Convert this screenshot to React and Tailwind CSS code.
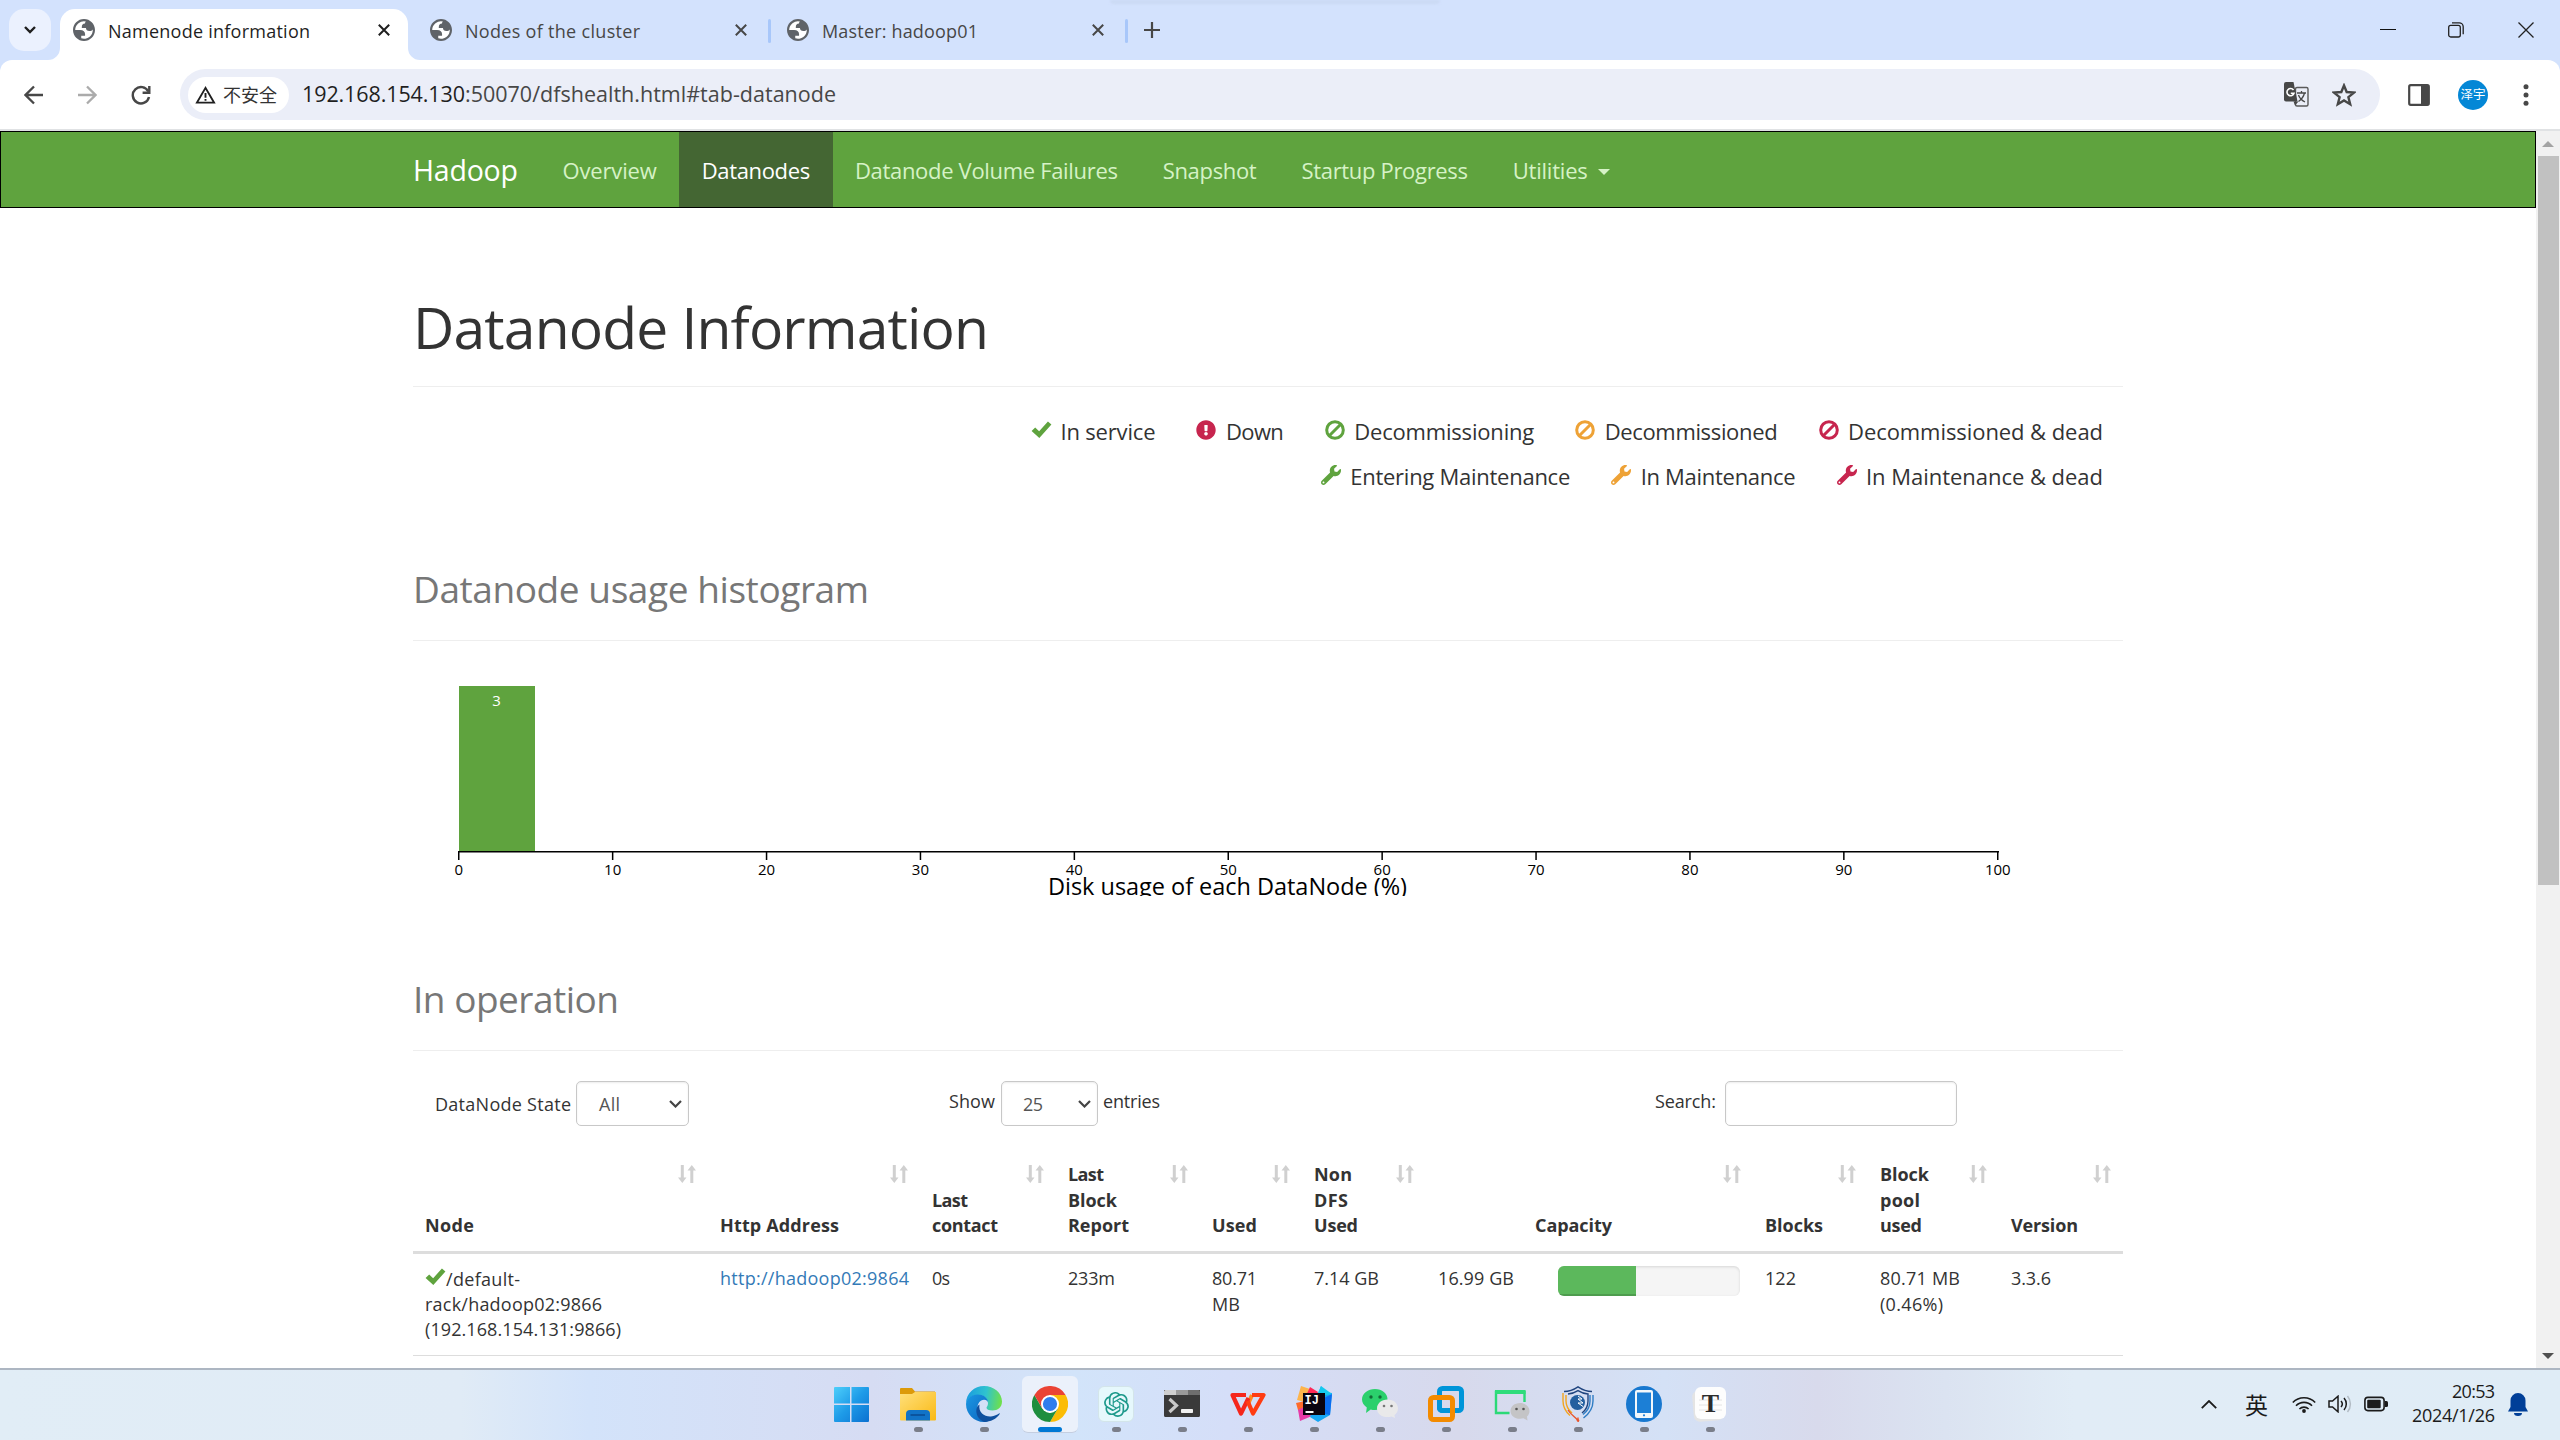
import React, { useLayoutEffect, useRef, useState } from "react";
import { SiOpenai } from "react-icons/si";
import { FaExclamationCircle, FaWrench } from "react-icons/fa";

/* Single-line text whose tracking is adjusted so that it spans `w` pixels. */
function T({ w, className = "", children }) {
  const ref = useRef(null);
  const [ls, setLs] = useState(0);
  useLayoutEffect(() => {
    const natural = ref.current.getBoundingClientRect().width;
    setLs((w - natural) / Math.max(1, String(children).length - 1));
  }, [w, children]);
  return (
    <span
      ref={ref}
      className={"inline-block whitespace-pre " + className}
      style={{ letterSpacing: ls + "px", marginRight: -ls + "px" }}
    >
      {children}
    </span>
  );
}

/* ---------- browser chrome ---------- */

const Globe = () => (
  <svg viewBox="2 2 20 20" className="h-[22px] w-[22px] shrink-0">
    <circle cx="12" cy="12" r="9" fill="#fff" />
    <path
      fill="#5f6368"
      fillRule="evenodd"
      d="M12 22C6.477 22 2 17.523 2 12S6.477 2 12 2s10 4.477 10 10-4.477 10-10 10zM4 12h4.4c3.407.022 4.922 1.73 4.543 5.127H9.488v2.47a8.004 8.004 0 0 0 10.498-8.083C19.327 12.504 18.332 13 17 13c-2.137 0-3.206-.916-3.206-2.75h-3.748c-.274-2.728.683-4.092 2.87-4.092 0-.975.327-1.597.811-1.97A8.004 8.004 0 0 0 4 12z"
    />
  </svg>
);

const CloseX = ({ color }) => (
  <svg viewBox="0 0 12 12" className="h-3 w-3" fill="none" stroke={color} strokeWidth="2">
    <path d="M.8.8l10.4 10.4M11.2.8L.8 11.2" />
  </svg>
);

function Tab({ title, w, active }) {
  return (
    <div
      className={
        active
          ? "relative mt-[9px] ml-[9px] flex h-[51px] w-[348px] rounded-t-[15px] bg-white pl-[13px]"
          : "relative mt-[9px] flex h-[51px] w-[357px] pl-[22px]"
      }
    >
      {active && (
        <>
          <svg viewBox="0 0 12 12" className="absolute bottom-0 -left-3 h-3 w-3">
            <path d="M12 0v12H0A12 12 0 0 0 12 0z" fill="#fff" />
          </svg>
          <svg viewBox="0 0 12 12" className="absolute -right-3 bottom-0 h-3 w-3">
            <path d="M0 0v12h12A12 12 0 0 1 0 0z" fill="#fff" />
          </svg>
        </>
      )}
      <div className="flex h-[42px] items-center">
        <Globe />
        <div className={"ml-[13px] w-[270px] pt-[2px] text-[18px] " + (active ? "text-[#1f1f1f]" : "text-[#474747]")}>
          <T w={w}>{title}</T>
        </div>
        <CloseX color={active ? "#1f1f1f" : "#474747"} />
      </div>
    </div>
  );
}

function TabStrip() {
  return (
    <div className="relative flex h-[60px] bg-[#d3e2fd]">
      <div className="absolute top-0 left-[1110px] h-[4px] w-[330px] rounded-b-full bg-[#cbdaf4] blur-[1px]" />
      <div className="mt-[9px] ml-[9px] flex h-[42px] w-[42px] items-center justify-center rounded-[15px] bg-[#ebf1fe]">
        <svg viewBox="0 0 12 8" className="h-2 w-3" fill="none" stroke="#1f1f1f" strokeWidth="2.4">
          <path d="M1 1l5 5 5-5" />
        </svg>
      </div>
      <Tab title="Namenode information" w={202} active />
      <Tab title="Nodes of the cluster" w={175} />
      <div className="-mr-[6px] mt-[19px] ml-[3px] h-6 w-[3px] rounded bg-[#a8c7fa]" />
      <Tab title="Master: hadoop01" w={156} />
      <div className="mt-[19px] ml-[3px] h-6 w-[3px] rounded bg-[#a8c7fa]" />
      <svg viewBox="0 0 16 16" className="mt-[22px] ml-4 h-4 w-4" stroke="#474747" strokeWidth="2.2">
        <path d="M8 0v16M0 8h16" />
      </svg>
      <div className="mt-[22px] mr-[26px] ml-auto flex h-4 items-center">
        <svg viewBox="0 0 16 16" className="mr-[52px] h-4 w-4" stroke="#111" strokeWidth="1">
          <path d="M0 7.5h16" />
        </svg>
        <svg viewBox="0 0 16 16" className="mr-[54px] h-4 w-4" fill="none" stroke="#222" strokeWidth="1.3">
          <rect x=".7" y="3.4" width="11.6" height="11.6" rx="2" />
          <path d="M4 .8h7.2a4 4 0 0 1 4 4v7.4" />
        </svg>
        <svg viewBox="0 0 16 16" className="h-4 w-4" fill="none" stroke="#222" strokeWidth="1.3">
          <path d="M.5.5l15 15M15.500.5l-15 15" />
        </svg>
      </div>
    </div>
  );
}

function Toolbar() {
  return (
    <div className="bg-[#d3e2fd]">
      <div className="flex h-[69px] items-center rounded-t-[12px] bg-white">
        <svg viewBox="0 0 20 20" className="ml-[24px] h-5 w-5" fill="none" stroke="#474747" strokeWidth="2.3">
          <path d="M19 10H2M10 1.500L1.500 10l8.500 8.500" />
        </svg>
        <svg viewBox="0 0 20 20" className="ml-[33px] h-5 w-5" fill="none" stroke="#ababab" strokeWidth="2.3">
          <path d="M1 10h17M10 1.500l8.500 8.500-8.500 8.500" />
        </svg>
        <svg viewBox="0 0 20 20" className="ml-[34px] h-5 w-5" fill="none" stroke="#474747" strokeWidth="2.4">
          <path d="M17.300 6.500A8.200 8.200 0 1 0 18 12" />
          <path d="M18.300 1v6.700h-6.700" />
        </svg>
        <div className="ml-[29px] flex h-[51px] w-[2200px] items-center rounded-full bg-[#ebeef8] pl-[8px]">
          <div className="flex h-[36px] w-[101px] items-center rounded-full bg-white pl-[7px]">
            <svg viewBox="0 0 22 19" className="h-[18px] w-[21px]" fill="none" stroke="#1f1f1f" strokeWidth="2">
              <path d="M11 2L2 17.500h18z" />
              <path d="M11 7.500v5M11 13.700v2" />
            </svg>
            <div className="ml-[7px] font-['Noto_Sans_CJK_SC',sans-serif] text-[18px] text-[#333]">
              <T w={54}>不安全</T>
            </div>
          </div>
          <div className="ml-[13px] flex text-[21.500px] text-[#474747]">
            <T w={163} className="text-[#1f1f1f]">192.168.154.130</T>
            <T w={371}>:50070/dfshealth.html#tab-datanode</T>
          </div>
          <svg viewBox="0 0 25 25" className="mr-[23px] ml-auto h-[25px] w-[25px]">
            <rect x="11.500" y="5.500" width="12.500" height="18.500" rx="1.500" fill="#ebeef8" stroke="#5a5a5a" strokeWidth="1.400" />
            <path d="M2 0h7.500l4 19.500H2a2 2 0 0 1-2-2V2a2 2 0 0 1 2-2z" fill="#474747" />
            <path d="M9.500 8A3.600 3.600 0 1 0 10 11.300H6.800" stroke="#fff" strokeWidth="1.600" fill="none" />
            <path d="M13 11h9M17.500 9v2M20.500 11c-1 4-3 6.500-6 8.500M14.500 13c1 3 3.500 5.500 6.500 7" stroke="#474747" strokeWidth="1.300" fill="none" />
            <path d="M9.500 19.500h5l-3.500 4z" fill="#474747" />
          </svg>
          <svg viewBox="0 0 24 24" className="mr-[24px] h-6 w-6" fill="none" stroke="#474747" strokeWidth="2.400">
            <path d="M12 2.500l2.700 6.500 7.200.6-5.500 4.600 1.800 7-6.200-3.800-6.200 3.800 1.800-7-5.500-4.600 7.200-.6z" />
          </svg>
        </div>
        <svg viewBox="0 0 22 22" className="ml-[28px] h-[22px] w-[22px]">
          <rect x="1.200" y="1.200" width="19.600" height="19.600" rx="1.500" fill="none" stroke="#474747" strokeWidth="2.200" />
          <path d="M13 1h7v20h-7z" fill="#474747" />
        </svg>
        <div className="ml-[28px] flex h-[30px] w-[30px] items-center justify-center rounded-full bg-[#0487d6] font-['Noto_Sans_CJK_SC',sans-serif] text-[12.500px] leading-none text-white">
          <T w={25}>泽宇</T>
        </div>
        <svg viewBox="0 0 6 22" className="ml-[35px] h-[22px] w-[6px]" fill="#474747">
          <circle cx="3" cy="2.700" r="2.500" />
          <circle cx="3" cy="11" r="2.500" />
          <circle cx="3" cy="19.300" r="2.500" />
        </svg>
      </div>
      <div className="h-[2px] bg-[#e0e2e4]" />
    </div>
  );
}

/* ---------- page ---------- */

function Nav() {
  const items = [
    ["Overview", 94.5],
    ["Datanodes", 108.5],
    ["Datanode Volume Failures", 263],
    ["Snapshot", 94],
    ["Startup Progress", 166.5],
    ["Utilities", 75],
  ];
  return (
    <nav className="flex h-[77px] border border-black bg-[#5fa33e] pl-[412px] text-[22px] text-[#d6f2c6]">
      <div className="flex w-[127px] items-center pt-px text-[28.500px] text-white">
        <T w={105}>Hadoop</T>
      </div>
      {items.map(([label, w]) => (
        <div
          key={label}
          className={
            "flex items-center px-[22.400px] pt-px " + (label === "Datanodes" ? "bg-[#446633] text-white" : "")
          }
        >
          <T w={w}>{label}</T>
          {label === "Utilities" && (
            <svg viewBox="0 0 12 6" className="mt-[3px] ml-[10px] h-[6px] w-3" fill="currentColor">
              <path d="M0 0h12L6 6z" />
            </svg>
          )}
        </div>
      ))}
    </nav>
  );
}

const Check = ({ className }) => (
  <svg viewBox="0 0 21 18" className={className} fill="#5fa33e">
    <path d="M0 10.500L3.800 6.800l4.200 4L17.300.5 21 3.800 8.200 18z" />
  </svg>
);

const Ban = ({ color }) => (
  <svg viewBox="0 0 20 20" className="h-5 w-5" fill="none" stroke={color} strokeWidth="3">
    <circle cx="10" cy="10" r="8.300" />
    <path d="M4.500 15.500l11-11" />
  </svg>
);

const GREEN = "#5fa33e";
const ORANGE = "#eea236";
const RED = "#c7254e";

function Item({ icon, label, w, gap = "pl-[9px]" }) {
  return (
    <div className="flex items-center">
      <div className="mb-[4px] flex w-[21px] justify-center">{icon}</div>
      <div className={gap}>
        <T w={w}>{label}</T>
      </div>
    </div>
  );
}

const Wrench = ({ color }) => <FaWrench color={color} className="h-5 w-5" />;

function Legend() {
  return (
    <div className="flex h-[113px] flex-col items-end pt-[22px] pr-[20px] text-[22px]">
      <div className="flex h-[45px] items-center gap-[40.400px]">
        <Item icon={<Check className="h-[17px] w-[21px]" />} label="In service" w={95} />
        <Item icon={<FaExclamationCircle color={RED} className="h-5 w-5" />} label="Down" w={58} />
        <Item icon={<Ban color={GREEN} />} label="Decommissioning" w={180} />
        <Item icon={<Ban color={ORANGE} />} label="Decommissioned" w={173} />
        <Item icon={<Ban color={RED} />} label="Decommissioned & dead" w={255} />
      </div>
      <div className="flex h-[45px] items-center gap-[40.400px]">
        <Item icon={<Wrench color={GREEN} />} label="Entering Maintenance" w={220} />
        <Item icon={<Wrench color={ORANGE} />} label="In Maintenance" w={155} />
        <Item icon={<Wrench color={RED} />} label="In Maintenance & dead" w={237} />
      </div>
    </div>
  );
}

function Histogram() {
  const ticks = [0, 10, 20, 30, 40, 50, 60, 70, 80, 90, 100];
  return (
    <svg width="1710" height="255" className="block overflow-hidden">
      <rect x="46" y="45" width="76" height="165" fill={GREEN} />
      <text x="83.500" y="64.500" fontSize="15" fill="#fff" textAnchor="middle">3</text>
      <path d="M45 210.750h1541" stroke="#000" strokeWidth="1.500" />
      {ticks.map((t) => (
        <g key={t}>
          <path d={`M${45.75 + t * 15.39} 210v9`} stroke="#000" strokeWidth="1.500" />
          <text x={45.75 + t * 15.39} y="233.500" fontSize="15" textAnchor="middle">{t}</text>
        </g>
      ))}
      <text x="635" y="254" fontSize="23.500" textLength="359" lengthAdjust="spacing">
        Disk usage of each DataNode (%)
      </text>
    </svg>
  );
}

const Select = ({ value, vw, className }) => (
  <div
    className={
      "flex h-[45px] items-center rounded-[5px] border border-[#c8c8c8] bg-white text-[#555] shadow-[inset_0_1px_2px_rgba(0,0,0,0.08)] " +
      className
    }
  >
    <T w={vw} className="pt-px">{value}</T>
    <svg viewBox="0 0 13 8" className="mr-[6px] ml-auto h-2 w-[13px]" fill="none" stroke="#444" strokeWidth="2.200">
      <path d="M1 1l5.500 5.500L12 1" />
    </svg>
  </div>
);

function Controls() {
  return (
    <div className="flex h-[99px] pt-[30px] text-[18px]">
      <div className="flex h-[46px] w-[163px] items-center pl-[22px]">
        <T w={136}>DataNode State</T>
      </div>
      <Select value="All" vw={21} className="w-[113px] pl-[22px]" />
      <div className="flex h-[40px] w-[312px] items-center justify-end pr-[6px]">
        <T w={46}>Show</T>
      </div>
      <Select value="25" vw={20} className="w-[97px] pl-[21px]" />
      <div className="flex h-[40px] w-[627px] items-center pl-[5px]">
        <T w={57}>entries</T>
        <T w={61} className="ml-[495px]">Search:</T>
      </div>
      <div className="h-[45px] w-[232px] rounded-[5px] border border-[#c8c8c8] shadow-[inset_0_1px_2px_rgba(0,0,0,0.08)]" />
    </div>
  );
}

const SortIcon = () => (
  <svg viewBox="0 0 18 18" className="mt-[3px] h-[18px] w-[18px] shrink-0" fill="#d0d0d0">
    <path d="M2.800 0h3v12.500h2.700L4.300 18 0 12.500h2.800z" />
    <path d="M12.300 18h3V5.500H18L13.800 0 9.500 5.500h2.800z" />
  </svg>
);

const COLS = "grid grid-cols-[295px_212px_136px_144px_102px_124px_327px_115px_131px_124px]";

function DataTable() {
  const heads = [
    [["Node", 49]],
    [["Http Address", 119]],
    [["Last", 36], ["contact", 66]],
    [["Last", 36], ["Block", 49], ["Report", 61]],
    [["Used", 45]],
    [["Non", 38], ["DFS", 34], ["Used", 44]],
    [["Capacity", 77]],
    [["Blocks", 58]],
    [["Block", 49], ["pool", 40], ["used", 42]],
    [["Version", 67]],
  ];
  return (
    <div className="text-[18px] leading-[25.700px]">
      <div className={COLS + " h-[104px] border-b-[3px] border-[#ddd] font-bold"}>
        {heads.map((lines, i) => (
          <div key={i} className="flex justify-between pt-3 pr-[12px] pb-3 pl-3">
            <div className={"flex flex-col items-start justify-end " + (i === 6 ? "pl-[97px]" : "")}>
              {lines.map(([t, w]) => (
                <T key={t} w={w}>{t}</T>
              ))}
            </div>
            <SortIcon />
          </div>
        ))}
      </div>
      <div className={COLS + " h-[102px] border-b border-[#ddd] *:flex *:flex-col *:items-start *:pt-3 *:pl-3"}>
        <div>
          <div className="flex h-[25.700px] pt-px">
            <Check className="mt-px h-[17px] w-[21px]" />
            <T w={74}>/default-</T>
          </div>
          <T w={177}>rack/hadoop02:9866</T>
          <T w={196}>(192.168.154.131:9866)</T>
        </div>
        <div className="text-[#337ab7]"><T w={189}>http://hadoop02:9864</T></div>
        <div><T w={18}>0s</T></div>
        <div><T w={47}>233m</T></div>
        <div>
          <T w={45}>80.71</T>
          <T w={28}>MB</T>
        </div>
        <div><T w={65}>7.14 GB</T></div>
        <div>
          <div className="flex">
            <T w={76}>16.99 GB</T>
            <div className="ml-[44px] flex h-[30px] w-[182px] overflow-hidden rounded-[6px] bg-[#f5f5f5] shadow-[inset_0_1px_3px_rgba(0,0,0,0.12)]">
              <div className="w-[78px] bg-[#5cb85c] shadow-[inset_0_-2px_0_rgba(0,0,0,0.15)]" />
            </div>
          </div>
        </div>
        <div><T w={31}>122</T></div>
        <div>
          <T w={80}>80.71 MB</T>
          <T w={63}>(0.46%)</T>
        </div>
        <div><T w={40}>3.3.6</T></div>
      </div>
    </div>
  );
}

function Page() {
  return (
    <div className="flex h-[1237px]">
      <div className="w-[2536px] overflow-hidden bg-white text-[#333]">
        <Nav />
        <main className="ml-[413px] w-[1710px]">
          <div className="flex h-[179px] items-end border-b border-[#eee] pb-[30px] text-[57px] leading-none">
            <T w={576}>Datanode Information</T>
          </div>
          <Legend />
          <div className="flex h-[141px] items-end border-b border-[#eee] pb-[33px] text-[37px] leading-none text-[#777]">
            <T w={456}>Datanode usage histogram</T>
          </div>
          <Histogram />
          <div className="flex h-[155px] items-end border-b border-[#eee] pb-[33px] text-[37px] leading-none text-[#777]">
            <T w={206}>In operation</T>
          </div>
          <Controls />
          <DataTable />
        </main>
      </div>
      <div className="flex w-6 flex-col items-center bg-[#f1f1f1]">
        <svg viewBox="0 0 12 6" className="mt-[10px] h-[6px] w-3" fill="#a3a3a3">
          <path d="M0 6h12L6 0z" />
        </svg>
        <div className="mt-[9px] h-[729px] w-[21px] bg-[#c1c1c1]" />
        <svg viewBox="0 0 12 6" className="mt-auto mb-[9px] h-[6px] w-3" fill="#505050">
          <path d="M0 0h12L6 6z" />
        </svg>
      </div>
    </div>
  );
}

/* ---------- taskbar ---------- */

const Ico = ({ children }) => (
  <svg viewBox="0 0 36 36" className="h-9 w-9">{children}</svg>
);

const Windows = () => (
  <Ico>
    <defs>
      <linearGradient id="win" x1="0" y1="0" x2="36" y2="36" gradientUnits="userSpaceOnUse">
        <stop stopColor="#4fd0fb" />
        <stop offset=".5" stopColor="#1e9be8" />
        <stop offset="1" stopColor="#0a6fd0" />
      </linearGradient>
    </defs>
    <path fill="url(#win)" d="M1 1h15v16.500H0V2a1 1 0 0 1 1-1zM17.500 1H34a1 1 0 0 1 1 1v15.500H17.500zM0 19h16v17H1a1 1 0 0 1-1-1zM17.500 19H35v16a1 1 0 0 1-1 1H17.500z" />
  </Ico>
);

const Folder = () => (
  <Ico>
    <defs>
      <linearGradient id="fol" x1="0" y1="0" x2="1" y2="1">
        <stop stopColor="#ffe07c" />
        <stop offset="1" stopColor="#f9b914" />
      </linearGradient>
    </defs>
    <path fill="#dc9a0a" d="M1 2h11l3 3.500h20V12H0V3a1 1 0 0 1 1-1z" />
    <path fill="url(#fol)" d="M0 8h12l3-2h21v27.500a1 1 0 0 1-1 1H1a1 1 0 0 1-1-1z" />
    <path fill="#1173c7" d="M6 34.500V28a4 4 0 0 1 4-4h16a4 4 0 0 1 4 4v6.500z" />
    <path stroke="#0a4a91" strokeWidth="1.500" d="M10.500 29h14.500" />
  </Ico>
);

const Edge = () => (
  <Ico>
    <defs>
      <linearGradient id="ed1" x1="0" y1=".3" x2="1" y2=".4">
        <stop stopColor="#1a9be0" />
        <stop offset=".55" stopColor="#2fc3cf" />
        <stop offset="1" stopColor="#6ee04c" />
      </linearGradient>
      <linearGradient id="ed2" x1="0" y1="0" x2="1" y2="1">
        <stop stopColor="#1b98e4" />
        <stop offset="1" stopColor="#0b63bd" />
      </linearGradient>
    </defs>
    <path fill="url(#ed1)" d="M0 18C0 7 8.500 0 18 0c10 0 18 7 18 15.500 0 6-4.500 9-9.500 9-4 0-6-1.500-6-2.800 0-1 1.500-1.700 1.500-4.500C22 12.500 17.500 9 12 9 5.500 9 1 13 0 18z" />
    <path fill="url(#ed2)" d="M0 18c.5-5 5-9.500 11.500-9.500 6 0 10.500 3.500 10.500 8 0-1-1.500-2.800-4-2.800-4 0-6.500 4-6.500 8 0 8 6 13 12 12.800C21 35.600 19.500 36 18 36 8 36 0 28 0 18z" />
    <path fill="#0f4f9e" d="M13.500 18.500C12 27 19 31 25 30.500c3.500-.3 6-1.800 8-3 .7-.4 1 .1.700.6C30.500 33 24.500 36 18.500 36 12.500 34 9.500 28 10.500 23c.5-2.300 1.500-3.700 3-4.500z" />
  </Ico>
);

const Chrome = () => (
  <Ico>
    <path fill="#fbbc05" d="M18 9h15.600A18 18 0 0 1 18 36l7.800-13.500z" />
    <path fill="#1e8e3e" d="M2.400 9l7.800 13.500L18 27l7.800-4.500L18 36A18 18 0 0 1 2.400 9z" />
    <path fill="#ea4335" d="M18 9h15.600A18 18 0 0 0 2.400 9l7.800 13.500z" />
    <circle cx="18" cy="18" r="9" fill="#fff" />
    <circle cx="18" cy="18" r="7.100" fill="#2f7ded" />
  </Ico>
);

const Gpt = () => (
  <div className="flex h-9 w-9 items-center justify-center rounded-[6px] border border-[#d3e5ea] bg-[#e6f8fc]">
    <SiOpenai color="#1f9a8c" className="h-[25px] w-[25px]" />
  </div>
);

const Terminal = () => (
  <Ico>
    <path fill="#3a3a3a" d="M0 4h36v25.500a1.500 1.500 0 0 1-1.500 1.500h-33A1.500 1.500 0 0 1 0 29.500z" />
    <path fill="#cfcfcf" d="M0 9V5.500A1.500 1.500 0 0 1 1.500 4H12v5z" />
    <path fill="#9a9a9a" d="M12 4h12v5H12z" />
    <path fill="#6e6e6e" d="M24 4h10.500A1.500 1.500 0 0 1 36 5.500V9H24z" />
    <path d="M5.500 13l7 6.500-7 6.500" fill="none" stroke="#c9c9c9" strokeWidth="3.200" />
    <rect x="17" y="23" width="12" height="4" rx=".8" fill="#f0f0f0" />
  </Ico>
);

const Wps = () => (
  <Ico>
    <g fill="none" strokeLinejoin="round" strokeWidth="4.200">
      <path stroke="#ff8a1e" d="M18 18l4-9" />
      <path stroke="#f5261c" d="M16 9H2.500L11 27.500 18.500 12" />
      <path stroke="#ff3c12" d="M17.500 15L23 27.500 33.500 9H22" />
    </g>
  </Ico>
);

const Idea = () => (
  <Ico>
    <path fill="#fdb44b" d="M5 0l9 3L9 16 1 14z" />
    <path fill="#fe2857" d="M14 1l8 5-6 12L2 24l6-10z" />
    <path fill="#ff6a2b" d="M0 17l9-2-1 8-6 1z" />
    <path fill="#e83aa8" d="M2 24l8-4 6 10-12 5z" />
    <path fill="#16a6f5" d="M25 0l3 6 8 1-2 22-12 7-8-5z" />
    <path fill="#0b6df0" d="M36 8l-8 4v16l6 1z" />
    <path fill="#15c9ef" d="M25 0l-4 9h10l5-1z" />
    <rect x="7" y="7" width="22" height="22" fill="#0b0410" />
    <text x="8.500" y="17.500" fontFamily="Liberation Mono" fontWeight="700" fontSize="12" fill="#fff">IJ</text>
    <path fill="#fff" d="M9.500 25h8v2h-8z" />
  </Ico>
);

const Wechat = () => (
  <Ico>
    <path fill="#2bd06c" d="M13 3c7 0 12.500 4.600 12.500 10.500S20 24 13 24c-1.500 0-3-.2-4.300-.6L4 27l.8-5.500C2 19.500 0 16.800 0 13.500 0 7.600 6 3 13 3z" />
    <circle cx="9" cy="11" r="1.700" fill="#136b38" />
    <circle cx="18" cy="11" r="1.700" fill="#136b38" />
    <path fill="#e9e9ea" d="M25.500 13.500c6 0 10.500 3.900 10.500 8.900 0 2.700-1.500 5-3.500 6.600l.5 3-3.500-1.500c-1.200.4-2.600.6-4 .6-6 0-10.500-3.800-10.500-8.700s4.500-8.900 10.500-8.900z" />
    <circle cx="22" cy="20" r="1.300" fill="#777" />
    <circle cx="29.500" cy="20" r="1.300" fill="#777" />
  </Ico>
);

const Vmware = () => (
  <Ico>
    <rect x="11.500" y="2.500" width="22" height="22" rx="3" fill="none" stroke="#0095d9" strokeWidth="5" />
    <rect x="2.500" y="11.500" width="22" height="22" rx="3" fill="none" stroke="#f38b00" strokeWidth="5" />
    <path d="M11.500 16v6a2.500 2.500 0 0 0 2.500 2.500h8" fill="none" stroke="#0095d9" strokeWidth="5" />
  </Ico>
);

const WechatScreen = () => (
  <Ico>
    <path d="M30.500 16V6H2v21h13.500" fill="none" stroke="#2bd977" strokeWidth="2.400" />
    <path d="M1 4h30.500v4H1z" fill="#2fdc7b" />
    <path fill="#c4c4c6" d="M26 17c5.500 0 9.500 3.500 9.500 8 0 2.300-1 4.200-2.500 5.500l.5 4-4-2.200c-1 .3-2.200.5-3.500.5-5.500 0-9.500-3.400-9.500-7.800s4-8 9.500-8z" />
    <circle cx="22.500" cy="23" r="1.300" fill="#555" />
    <circle cx="29.500" cy="23" r="1.300" fill="#555" />
  </Ico>
);

const Shield = () => (
  <Ico>
    <g fill="none" strokeWidth="1.400">
      <path stroke="#20457f" d="M4 5.500C9 5.500 14 3.500 18 .8c4 2.700 9 4.700 14 4.700" />
      <path stroke="#f2a51f" d="M3 7v8c0 6 2.500 10.500 7 14.500M6 9v6c0 4.500 2 8.500 6 12" />
      <path stroke="#e8542b" d="M8 24c3 5 7 6.500 10 10.500v-3" />
      <path stroke="#2f7dc4" d="M33 9v6c0 7-3 12-9.500 17M30 9v6c0 6-2.500 10-7 13.500" />
      <path stroke="#20457f" d="M8 8c4-.3 7-1.500 10-3.400C21 6.500 24 7.700 28 8v7c0 5-2 9-6 12" />
    </g>
    <circle cx="17.500" cy="16.500" r="7.500" fill="#245f9f" />
    <path d="M18 10l4 3h-4l5 4h-5l5 3.500" stroke="#fff" strokeWidth="1" fill="none" />
    <circle cx="18" cy="34.500" r="1.300" fill="#e8542b" />
  </Ico>
);

const Phone = () => (
  <Ico>
    <circle cx="18" cy="18" r="18" fill="#1878cf" />
    <rect x="9" y="4" width="18" height="28" rx="2" fill="#f2f7fb" />
    <rect x="11" y="6.500" width="14" height="20.500" fill="#1c7fd6" />
    <circle cx="18" cy="29.300" r="1.100" fill="#1c7fd6" />
  </Ico>
);

const Typora = () => (
  <Ico>
    <rect x="1" y="4" width="30" height="31" rx="6" fill="#e4e4e4" transform="rotate(-5 16 20)" />
    <rect x="3" y="1" width="31" height="32" rx="6" fill="#fdfdfd" />
    <path d="M7 14h23M7 19h23M7 24h23" stroke="#e4e4e4" />
    <text x="18.500" y="26" fontFamily="Liberation Serif" fontWeight="700" fontSize="26" textAnchor="middle" fill="#2c2c2c">T</text>
  </Ico>
);

function Taskbar() {
  const apps = [Windows, Folder, Edge, Chrome, Gpt, Terminal, Wps, Idea, Wechat, Vmware, WechatScreen, Shield, Phone, Typora];
  return (
    <div className="flex h-[72px] border-t-2 border-[#adb6c2] bg-[linear-gradient(90deg,#e1edf6_0%,#e0ebf6_18%,#d3e3fa_23%,#d6dcf3_34%,#d2e4fa_42%,#d5def8_48%,#d7d9ec_57%,#d4e1f6_65%,#d8daec_71%,#dbe3f1_76%,#e1ecf6_81%,#dfecf6_100%)]">
      <div className="ml-[824px] flex gap-[10px]">
        {apps.map((App, i) => (
          <div
            key={i}
            className={
              "mt-[6px] flex h-[57px] w-[56px] flex-col items-center justify-between rounded-[6px] pt-[10px] " +
              (i === 3 ? "border-b border-[#c4cee0] bg-[#ebf1fb]" : "border-b border-transparent")
            }
          >
            <App />
            {i > 0 && (
              <div className={i === 3 ? "h-[5px] w-6 rounded-full bg-[#0078d4]" : "h-[5px] w-[9px] rounded-full bg-[#7a7e8a]"} />
            )}
          </div>
        ))}
      </div>
      <div className="ml-auto flex h-[68px] items-center pr-[32px] text-[#1b1b1b]">
        <svg viewBox="0 0 16 9" className="mt-px mr-[28px] h-[9px] w-4" fill="none" stroke="#1b1b1b" strokeWidth="1.800">
          <path d="M.8 8.200L8 1l7.200 7.200" />
        </svg>
        <span className="mr-[24px] font-['Noto_Sans_CJK_SC',sans-serif] text-[23px] leading-none">英</span>
        <svg viewBox="0 0 24 17" className="mr-3 h-[17px] w-6" fill="none" stroke="#1b1b1b" strokeWidth="1.600">
          <path d="M.8 6.500a15.500 15.500 0 0 1 22.400 0M4 9.800a11 11 0 0 1 16 0M7.400 13a6.500 6.500 0 0 1 9.200 0" />
          <circle cx="12" cy="15" r="1.900" fill="#1b1b1b" stroke="none" />
        </svg>
        <svg viewBox="0 0 24 18" className="mr-3 h-[18px] w-6" fill="none" stroke="#1b1b1b" strokeWidth="1.500">
          <path d="M1 6h3.500L10 1.200v15.600L4.500 12H1z" />
          <path d="M13 6a4.500 4.500 0 0 1 0 6M16 3a9 9 0 0 1 0 12" />
          <path d="M19.500 1a12.500 12.500 0 0 1 0 16" stroke="#b3bcc5" />
        </svg>
        <svg viewBox="0 0 24 16" className="mr-[24px] h-4 w-6">
          <rect x=".9" y="1.400" width="19.200" height="13.200" rx="3" fill="none" stroke="#1b1b1b" strokeWidth="1.600" />
          <rect x="3.200" y="3.700" width="13.500" height="8.600" rx="1" fill="#1b1b1b" />
          <path d="M21 5h1.500A1.500 1.500 0 0 1 24 6.500v3A1.500 1.500 0 0 1 22.500 11H21z" fill="#1b1b1b" />
        </svg>
        <div className="mr-[13px] flex flex-col items-end pb-[2px] text-[18px] leading-[24px]">
          <T w={43}>20:53</T>
          <T w={83}>2024/1/26</T>
        </div>
        <svg viewBox="0 0 20 23" className="h-[23px] w-5" fill="#003f98">
          <path d="M10 0a7.500 7.500 0 0 1 7.500 7.500V14l2.500 4.500H0L2.500 14V7.500A7.500 7.500 0 0 1 10 0zM6 20h8a4 3 0 0 1-8 0z" />
        </svg>
      </div>
    </div>
  );
}

export default function App() {
  return (
    <div className="h-[1440px] w-[2560px] overflow-hidden bg-white font-['Open_Sans','Noto_Sans',sans-serif]">
      <TabStrip />
      <Toolbar />
      <Page />
      <Taskbar />
    </div>
  );
}
